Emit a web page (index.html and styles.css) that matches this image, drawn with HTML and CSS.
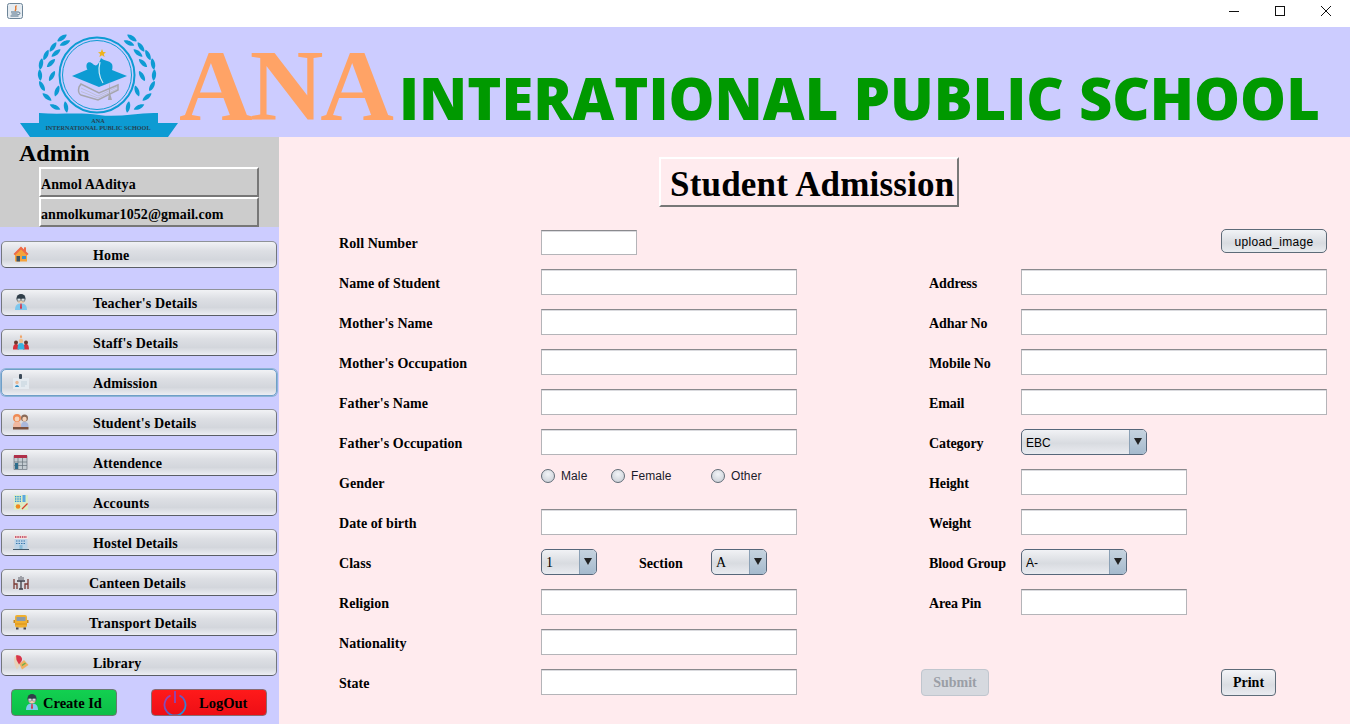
FILE: index.html
```html
<!DOCTYPE html>
<html>
<head>
<meta charset="utf-8">
<title>Student Admission</title>
<link rel="stylesheet" href="styles.css">
</head>
<body>

<svg class="defs" width="0" height="0">
    <defs>
        <path id="leaf" d="M-5.800 0 C-3 -2.800 3 -2.800 5.800 0 C3 2.800 -3 2.800 -5.800 0 Z" fill="#0d9bd3"/>
        <g id="man">
            <path d="M2 16 C2 10.500 5 9.500 8 9.500 C11 9.500 14 10.500 14 16 Z" fill="#7fc8ee"/>
            <path d="M7.400 9.500 H8.600 L9 14 L8 15.500 L7 14 Z" fill="#d8344a"/>
            <circle cx="8" cy="4.500" r="4.500" fill="#2f3d48"/>
            <path d="M4.500 5 H11.500 V7 C11.500 10 4.500 10 4.500 7 Z" fill="#f0d0b0"/>
            <rect x="4.300" y="4.600" width="3.200" height="2.400" rx=".8" fill="#dfe6ea" stroke="#56656f" stroke-width=".6"/>
            <rect x="8.500" y="4.600" width="3.200" height="2.400" rx=".8" fill="#dfe6ea" stroke="#56656f" stroke-width=".6"/>
        </g>
        <linearGradient id="power-grad" x1="0" y1="0" x2="1" y2="1">
            <stop offset="0" stop-color="#a83ab0"/>
            <stop offset=".5" stop-color="#5a60c8"/>
            <stop offset="1" stop-color="#0fa6e0"/>
        </linearGradient>
    </defs>
</svg>

<div class="titlebar">
    <svg class="java-icon" width="16" height="16" viewBox="0 0 16 16">
        <rect x=".5" y=".5" width="15" height="15" rx="2" fill="#e6ecf1" stroke="#6d8598"/>
        <path d="M9.500 2.500 C7 4.500 10.500 5 8 8" fill="none" stroke="#e2762a" stroke-width="1.400"/>
        <path d="M4 9 H11 M4.500 11 H10.500 M3.500 13 H11.500" stroke="#4f6d85" stroke-width="1"/>
        <path d="M11 9 C14 9 13.500 12 10.500 11.500" fill="none" stroke="#4f6d85"/>
    </svg>
    <div class="winbtns">
        <svg width="12" height="12" viewBox="0 0 12 12"><path d="M1 6.500 H11" stroke="#111" fill="none"/></svg>
        <svg width="12" height="12" viewBox="0 0 12 12"><rect x="1.500" y="1.500" width="9" height="9" stroke="#111" fill="none"/></svg>
        <svg width="12" height="12" viewBox="0 0 12 12"><path d="M1 1 L11 11 M11 1 L1 11" stroke="#111" fill="none"/></svg>
    </div>
</div>

<header class="banner">
    <svg class="logo" width="160" height="110" viewBox="0 0 160 110">
        <!-- laurels -->
        <g id="laurel-l">
            <use href="#leaf" transform="translate(36 80) rotate(25)"/>
            <use href="#leaf" transform="translate(28 70) rotate(40)"/>
            <use href="#leaf" transform="translate(23 59) rotate(62)"/>
            <use href="#leaf" transform="translate(21 48) rotate(85)"/>
            <use href="#leaf" transform="translate(22 37) rotate(-80)"/>
            <use href="#leaf" transform="translate(27 28) rotate(-65)"/>
            <use href="#leaf" transform="translate(34 20) rotate(-55)"/>
            <use href="#leaf" transform="translate(43 11) rotate(-35)"/>
            <use href="#leaf" transform="translate(47 80) rotate(80)"/>
            <use href="#leaf" transform="translate(38 64) rotate(-70)"/>
            <use href="#leaf" transform="translate(33 49) rotate(-60)"/>
            <use href="#leaf" transform="translate(32 36) rotate(-45)"/>
            <use href="#leaf" transform="translate(37 26) rotate(-40)"/>
            <use href="#leaf" transform="translate(46 16) rotate(-25)"/>
        </g>
        <use href="#laurel-l" transform="translate(156 0) scale(-1 1)"/>
        <!-- ring -->
        <circle cx="78" cy="48" r="37.500" fill="#CCCCFF" stroke="#0d9bd3" stroke-width="2"/>
        <circle cx="78" cy="48" r="34.500" fill="none" stroke="#0d9bd3" stroke-width="1"/>
        <!-- star, book, cap and students -->
        <path d="M83 22 L84.200 25 L87 25.200 L84.800 27 L85.600 30 L83 28.300 L80.400 30 L81.200 27 L79 25.200 L81.800 25 Z" fill="#eeb31c"/>
        <path d="M62 57 L60 60 C59 64 60 67 62 68 L79 73 L99 63 L99 58 L80 66 Z" fill="none" stroke="#a6a6ae" stroke-width="1.500"/>
        <path d="M62 61 L79 69 L98 60 M62 64.500 L79 71 L98 62" fill="none" stroke="#b8b8c2" stroke-width=".7"/>
        <path d="M53 49 L72 41 L88 41 L108 49 L80 60 Z" fill="#0d9bd3"/>
        <path d="M68 42 C66 36 70 33 74 37 C78 41 80 36 82 31 C85 34 90 33 93 37 C95 42 91 50 84 58 C80 52 72 47 68 42 Z" fill="#0d9bd3"/>
        <path d="M81 35 C79 43 80 50 84 56" fill="none" stroke="#d3e8f6" stroke-width="1.200"/>
        <path d="M91 53 V66 L93 73 H89 L90 66 Z" fill="#a6a6ae"/>
        <!-- ribbon -->
        <path d="M1 96 L20 96 L20 110 L11 110 Z M159 96 L139 96 L139 110 L149 110 Z" fill="#0d9bd3"/>
        <path d="M20 86 C40 88 60 85 80 88 C100 91 120 85 139 86 L139 110 L20 110 Z" fill="#0d9bd3"/>
        <text class="logo-text" x="79" y="96">ANA</text>
        <text class="logo-text" x="79" y="103">INTERNATIONAL PUBLIC SCHOOL</text>
    </svg>
    <div class="banner-text">
        <span class="ana">ANA</span>
        <span class="school">INTERATIONAL PUBLIC SCHOOL</span>
    </div>
</header>

<div class="content">

    <aside class="sidebar">
        <div class="admin">
            <div class="admin-title">Admin</div>
            <div class="admin-field">Anmol AAditya</div>
            <div class="admin-field">anmolkumar1052@gmail.com</div>
        </div>

        <nav class="nav">
            <button class="nav-btn nav-home">
                <svg class="nav-icon" viewBox="0 0 16 16"><path d="M1 8 L8 1 L11 4 V1.500 H13 V6 L15.500 8 L14 8.500 V15.500 H2 V8.500 Z" fill="#f5a33c"/><path d="M8 .5 L.5 8 L2 9.200 L8 3.500 L14 9.200 L15.500 8 L13 5.500 V1.500 H11 V3.500 Z" fill="#ee6a4a"/><rect x="3.500" y="10" width="3.500" height="5.500" fill="#3e5362"/><rect x="9" y="10" width="4" height="3" fill="#3b8fd0"/></svg>
                <span>Home</span>
            </button>
            <button class="nav-btn">
                <svg class="nav-icon" viewBox="0 0 16 16"><use href="#man"/></svg>
                <span>Teacher's Details</span>
            </button>
            <button class="nav-btn">
                <svg class="nav-icon" viewBox="0 0 16 16"><path d="M0 15.500 C0 11 1.500 10 3 10 C4.500 10 6 11 6 15.500 Z M10 15.500 C10 11 11.500 10 13 10 C14.500 10 16 11 16 15.500 Z" fill="#d6303a"/><circle cx="3" cy="8.500" r="2" fill="#6b3a2e"/><circle cx="13" cy="8.500" r="2" fill="#6b3a2e"/><path d="M4.500 15.500 C4.500 10 6 9 8 9 C10 9 11.500 10 11.500 15.500 Z" fill="#38b3e0"/><circle cx="8" cy="7" r="2.200" fill="#f0c090"/><path d="M8 .5 L9.200 3 L8 4.500 L6.800 3 Z" fill="#f0a060"/></svg>
                <span>Staff's Details</span>
            </button>
            <button class="nav-btn nav-focus">
                <svg class="nav-icon" viewBox="0 0 16 16"><rect x="0" y="4" width="16" height="11" fill="#e4eaf0"/><rect x="6" y="0" width="3" height="5" rx="1" fill="#3b4a58"/><circle cx="4" cy="8.500" r="1.700" fill="#e8b894"/><path d="M2 13 C2 10.500 6 10.500 6 13 Z" fill="#2b8cc4"/><path d="M8 8 H14 M8 10 H14 M8 12 H12" stroke="#c2d2dc"/></svg>
                <span>Admission</span>
            </button>
            <button class="nav-btn">
                <svg class="nav-icon" viewBox="0 0 16 16"><path d="M0 13 C0 8.500 2 7.500 4 7.500 C6.500 7.500 8 8.500 8 13 Z" fill="#f0b8a0"/><circle cx="4" cy="4" r="4" fill="#ee8a55"/><circle cx="4" cy="5" r="2.400" fill="#f6d2b8"/><circle cx="11.500" cy="4" r="3.500" fill="#8a6a58"/><circle cx="11.500" cy="5" r="2.200" fill="#f6d2b8"/><path d="M8 13 C8 9 9 8 11.500 8 C14 8 15.500 9 15.500 13 Z" fill="#aab8dc"/><rect x="0" y="13" width="15.500" height="2.500" fill="#7a5140"/></svg>
                <span>Student's Details</span>
            </button>
            <button class="nav-btn">
                <svg class="nav-icon" viewBox="0 0 16 16"><rect x="1" y="2" width="13" height="13.500" fill="#c4ccd2" stroke="#5c6670" stroke-width=".6"/><rect x="1" y="1" width="13" height="3" fill="#b0304a"/><path d="M5 4 V15 M9.500 4 V15 M1 8 H14 M1 11.500 H14" stroke="#67727c" stroke-width=".7"/><rect x="2" y="9" width="3" height="6" fill="#2e6d8c"/></svg>
                <span>Attendence</span>
            </button>
            <button class="nav-btn">
                <svg class="nav-icon" viewBox="0 0 16 16"><rect x="1" y="1" width="14" height="15" fill="#dcecc4"/><path d="M2 2 H8 V8 H2 Z" fill="#2a8fd8"/><path d="M3.500 2 V8 M5 2 V8 M6.500 2 V8 M2 3.500 H8 M2 5 H8 M2 6.500 H8" stroke="#dcecc4" stroke-width=".6"/><rect x="9.500" y="1" width="3" height="7" fill="#5aa8e0"/><circle cx="5" cy="12.500" r="2.300" fill="#f08a1c"/><path d="M9 15 L14.500 9.500" stroke="#d8402c" stroke-width="1.300"/></svg>
                <span>Accounts</span>
            </button>
            <button class="nav-btn">
                <svg class="nav-icon" viewBox="0 0 16 16"><rect x="1" y="1" width="14" height="4" fill="#f0e4e4"/><path d="M2 3 H14" stroke="#c03048" stroke-width="1.500" stroke-dasharray="1.500 .8"/><rect x="1.500" y="5" width="13" height="10" fill="#bcd4e8"/><path d="M3 7 H13 M3 9.500 H13" stroke="#3a78ac" stroke-width="1.200" stroke-dasharray="1.500 1"/><rect x="6.500" y="11" width="3" height="4" fill="#8abcd8"/><path d="M0 15.500 H16" stroke="#445a6a"/></svg>
                <span>Hostel Details</span>
            </button>
            <button class="nav-btn nav-long">
                <svg class="nav-icon" viewBox="0 0 16 16"><path d="M1 5 V15 M1 10 H4 V15 M15 5 V15 M15 10 H12 V15" stroke="#7a3a34" fill="none" stroke-width="1.300"/><path d="M4 7 H12 M8 7 V15 M6 15 H10" stroke="#3e3e46" fill="none" stroke-width="1.300"/><path d="M6 3 V7 M8 2 V7 M10 3 V7" stroke="#5e5e68"/></svg>
                <span>Canteen Details</span>
            </button>
            <button class="nav-btn nav-long">
                <svg class="nav-icon" viewBox="0 0 16 16"><rect x="2" y="1" width="12" height="12.500" rx="2" fill="#f0b030"/><rect x="3.500" y="3" width="9" height="4" fill="#8c9aa8"/><rect x="0.500" y="6" width="1.500" height="3" fill="#c88820"/><rect x="14" y="6" width="1.500" height="3" fill="#c88820"/><rect x="3" y="13.500" width="2.500" height="2" fill="#4a4a50"/><rect x="10.500" y="13.500" width="2.500" height="2" fill="#4a4a50"/><path d="M2 10 H14" stroke="#d89018"/></svg>
                <span>Transport Details</span>
            </button>
            <button class="nav-btn">
                <svg class="nav-icon" viewBox="0 0 16 16"><path d="M1 5 C1 2 3 1 5 1 L8 9 L4 15.500 C2 13 1 9 1 5 Z" fill="#e8d2b8"/><path d="M3 1.500 C7 0 11 4 8 8 L6 10.500 L3.500 6 Z" fill="#d8344a"/><path d="M6.500 10 L11 6 L15.500 11 L9 15.500 Z" fill="#f0b060"/><path d="M9 11.500 L12.500 9" stroke="#6ab04a" stroke-width="1.500"/></svg>
                <span>Library</span>
            </button>
        </nav>

        <div class="side-actions">
            <button class="act-btn act-create">
                <svg class="act-icon" viewBox="0 0 16 16"><use href="#man"/></svg>
                Create Id
            </button>
            <button class="act-btn act-logout">
                <svg class="act-power" width="24" height="25" viewBox="0 0 24 25">
                    <path d="M7.500 5.500 A10.500 10.500 0 1 0 16.500 5.500" fill="none" stroke="url(#power-grad)" stroke-width="1.800"/>
                    <path d="M12 1 V13" stroke="#8a48b8" stroke-width="1.800"/>
                </svg>
                LogOut
            </button>
        </div>
    </aside>

    <main class="main">
        <div class="heading-row">
            <h1 class="heading">Student Admission</h1>
        </div>

        <form class="form">
            <label class="lbl">Roll Number</label>
            <input class="txt txt-roll" type="text">
            <div class="up-cell"><button type="button" class="up-btn">upload_image</button></div>

            <label class="lbl">Name of Student</label>
            <input class="txt" type="text">
            <label class="lbl lbl-r">Address</label>
            <input class="txt" type="text">

            <label class="lbl">Mother's Name</label>
            <input class="txt" type="text">
            <label class="lbl lbl-r">Adhar No</label>
            <input class="txt" type="text">

            <label class="lbl">Mother's Occupation</label>
            <input class="txt" type="text">
            <label class="lbl lbl-r">Mobile No</label>
            <input class="txt" type="text">

            <label class="lbl">Father's Name</label>
            <input class="txt" type="text">
            <label class="lbl lbl-r">Email</label>
            <input class="txt" type="text">

            <label class="lbl">Father's Occupation</label>
            <input class="txt" type="text">
            <label class="lbl lbl-r">Category</label>
            <div class="combo combo-cat"><span class="combo-val sans">EBC</span><span class="combo-arrow"></span></div>

            <label class="lbl">Gender</label>
            <div class="radios">
                <span class="radio radio-male"><i></i>Male</span>
                <span class="radio radio-female"><i></i>Female</span>
                <span class="radio"><i></i>Other</span>
            </div>
            <label class="lbl lbl-r">Height</label>
            <input class="txt txt-short" type="text">

            <label class="lbl">Date of birth</label>
            <input class="txt" type="text">
            <label class="lbl lbl-r">Weight</label>
            <input class="txt txt-short" type="text">

            <label class="lbl">Class</label>
            <div class="class-cell">
                <div class="combo combo-small"><span class="combo-val">1</span><span class="combo-arrow"></span></div>
                <label class="lbl lbl-section">Section</label>
                <div class="combo combo-small"><span class="combo-val">A</span><span class="combo-arrow"></span></div>
            </div>
            <label class="lbl lbl-r">Blood Group</label>
            <div class="combo combo-blood"><span class="combo-val sans">A-</span><span class="combo-arrow"></span></div>

            <label class="lbl">Religion</label>
            <input class="txt" type="text">
            <label class="lbl lbl-r">Area Pin</label>
            <input class="txt txt-short" type="text">

            <label class="lbl">Nationality</label>
            <input class="txt" type="text">
            <div class="empty-cell"></div>

            <label class="lbl">State</label>
            <input class="txt" type="text">
            <div class="submit-cell">
                <button type="button" class="form-btn form-btn-off">Submit</button>
                <button type="button" class="form-btn">Print</button>
            </div>
        </form>
    </main>

</div>

</body>
</html>
```

FILE: styles.css
```css
html, body { margin: 0; padding: 0; height: 724px; overflow: hidden; background-color: #FFEBEE; font-family: 'Liberation Serif', serif; color: #000; }
button { font-family: 'Liberation Serif', serif; cursor: pointer; }
.defs { display: block; height: 0; }

/* title bar */
.titlebar { height: 27px; display: flex; align-items: center; justify-content: space-between; background-color: #FFF; }
.java-icon { margin: 0 0 5px 7px; }
.winbtns { display: flex; gap: 34px; padding-right: 18px; margin-bottom: 5px; }
.winbtns svg { display: block; }

/* banner */
.banner { height: 110px; display: flex; align-items: flex-start; background-color: #CCCCFF; }
.logo { flex: none; margin-left: 19px; display: block; }
.logo-text { font: bold 6.200px 'Liberation Serif', serif; fill: #27404f; text-anchor: middle; }
.banner-text { display: flex; align-items: baseline; padding-top: 8px; white-space: nowrap; }
.ana { font: bold 102px/102px 'Liberation Serif', serif; letter-spacing: -3px; color: #FFA366; }
.school { margin-left: 8px; font: 800 57.800px/58px 'Open Sans', sans-serif; color: #009900; }

.content { display: flex; height: 587px; }

/* sidebar */
.sidebar { width: 279px; flex: none; background-color: #CCCCFF; }
.admin { height: 90px; background-color: #CCCCCC; box-sizing: border-box; padding-left: 39px; }
.admin-title { margin-left: -20px; height: 30px; font: bold 24px/32px 'Liberation Serif', serif; }
.admin-field { box-sizing: border-box; width: 220px; height: 30px; line-height: 29px; padding-top: 1px; font-size: 14px; font-weight: bold; letter-spacing: .08px; border: 2px solid; border-color: #FFF #777 #777 #FFF; background-color: #CCC; }

.nav { display: flex; flex-direction: column; gap: 13px; padding: 14px 0 0 1px; }
.nav-btn { position: relative; display: flex; align-items: center; box-sizing: border-box; width: 276px; height: 27px; padding: 2px 0 0 91px; border: 1px solid #73777d; border-top-color: #8f9398; border-bottom-color: #5a5e66; border-radius: 5px; background: linear-gradient(#F1F2F5 0%, #DDDFE4 35%, #D3D6DC 70%, #ECEEF3 100%); font-size: 14px; font-weight: bold; letter-spacing: .15px; color: #000; }
.nav-home { margin-bottom: 8px; }
.nav-long { padding-left: 87px; }
.nav-focus { border-color: #6f9fc8; box-shadow: 0 0 0 1px #8eb4d6; }
.nav-icon { position: absolute; left: 11px; top: 4px; width: 16px; height: 16px; }

.side-actions { display: flex; gap: 34px; padding: 13px 0 0 11px; }
.act-btn { display: flex; align-items: center; box-sizing: border-box; height: 27px; padding: 2px 0 0; border: 1px solid #6a7a72; border-radius: 4px; font-size: 14.500px; font-weight: bold; color: #000; }
.act-create { width: 106px; gap: 3px; padding-left: 12px; background: linear-gradient(#12D050, #0CBE48); }
.act-logout { position: relative; width: 116px; padding-left: 47px; background: linear-gradient(#FF1A1A, #EE0E16); border-color: #8a6a70; }
.act-icon { width: 16px; height: 18px; margin-top: -3px; }
.act-power { position: absolute; left: 11px; top: 0; }

/* main form */
.main { flex: 1; background-color: #FFEBEE; }
.heading-row { padding: 20px 0 0 380px; }
.heading { box-sizing: border-box; width: 300px; height: 50px; margin: 0; padding: 6px 0 0 9px; border: 2px solid; border-color: #FFF #777 #777 #FFF; font-size: 35px; line-height: 40px; letter-spacing: .2px; font-weight: bold; white-space: nowrap; }

.form { display: grid; grid-template-columns: 202px 256px 124px 100px 306px; grid-auto-rows: 26px; row-gap: 14px; margin: 22px 0 0 60px; align-items: center; }
.lbl { font-size: 14px; font-weight: bold; letter-spacing: .05px; padding-top: 4px; }
.lbl-r { grid-column: 4; padding-left: 8px; letter-spacing: -.1px; }
.lbl-section { margin: 0 0 0 42px; width: 72px; }

.txt { box-sizing: border-box; width: 100%; height: 26px; margin: 0; padding: 0 4px; border: 1px solid #B4B4B8; border-top-color: #8a8a8e; box-shadow: inset 0 1px 0 #DADADE; background-color: #FFF; outline: none; }
.txt-roll { width: 96px; height: 25px; align-self: end; }
.txt-short { width: 166px; }

.up-cell { grid-column: 3 / 6; align-self: start; display: flex; justify-content: flex-end; }
.up-btn { box-sizing: border-box; width: 106px; height: 24px; padding: 1px 0 0; border: 1px solid #5d6b78; border-radius: 5px; background: linear-gradient(#F1F3F6, #D8DBE0 60%, #E8EBEF); font: 12px 'Liberation Sans', sans-serif; letter-spacing: .3px; color: #000; }

.radios { display: flex; align-self: start; height: 14px; align-items: center; font: 12px 'Liberation Sans', sans-serif; letter-spacing: .1px; }
.radio { display: flex; align-items: center; gap: 6px; color: #1a1a2a; }
.radio i { display: block; box-sizing: border-box; width: 14px; height: 14px; border: 1px solid #5f6b76; border-radius: 50%; background: radial-gradient(circle at 50% 35%, #F2F4F7, #C5CAD2); }
.radio-male { width: 70px; }
.radio-female { width: 100px; }

.combo { position: relative; box-sizing: border-box; height: 26px; display: flex; align-items: center; border: 1px solid #56677a; border-radius: 5px; background: linear-gradient(#F1F2F5, #D8DBE0 55%, #E9EBF0); overflow: hidden; }
.combo-cat { width: 126px; }
.combo-blood { width: 106px; }
.combo-small { width: 56px; flex: none; }
.combo-val { flex: 1; padding: 1px 0 0 4px; font-size: 14px; }
.combo-val.sans { font: 12px 'Liberation Sans', sans-serif; padding-top: 2px; }
.combo-arrow { position: relative; flex: none; width: 16px; height: 100%; border-left: 1px solid #8aa0b5; background: linear-gradient(#C6D3DF, #A5BACD); }
.combo-arrow::after { content: ""; position: absolute; left: 4px; top: 8px; border: 4px solid transparent; border-top: 7px solid #222; border-bottom: 0; }

.class-cell { display: flex; align-items: center; }
.empty-cell { grid-column: 3 / 6; }

.submit-cell { grid-column: 3 / 6; display: flex; align-items: center; padding-left: 124px; }
.form-btn { box-sizing: border-box; width: 55px; height: 27px; margin-left: 232px; padding: 1px 0 0; border: 1px solid #5d6b78; border-radius: 4px; background: linear-gradient(#F4F5F8, #DADDE2 60%, #E9EBF0); font-size: 14px; font-weight: bold; color: #000; }
.form-btn-off { width: 68px; margin-left: 0; border-color: #C0C6CE; background: #D6D9DF; color: #9a9ea6; }
```
